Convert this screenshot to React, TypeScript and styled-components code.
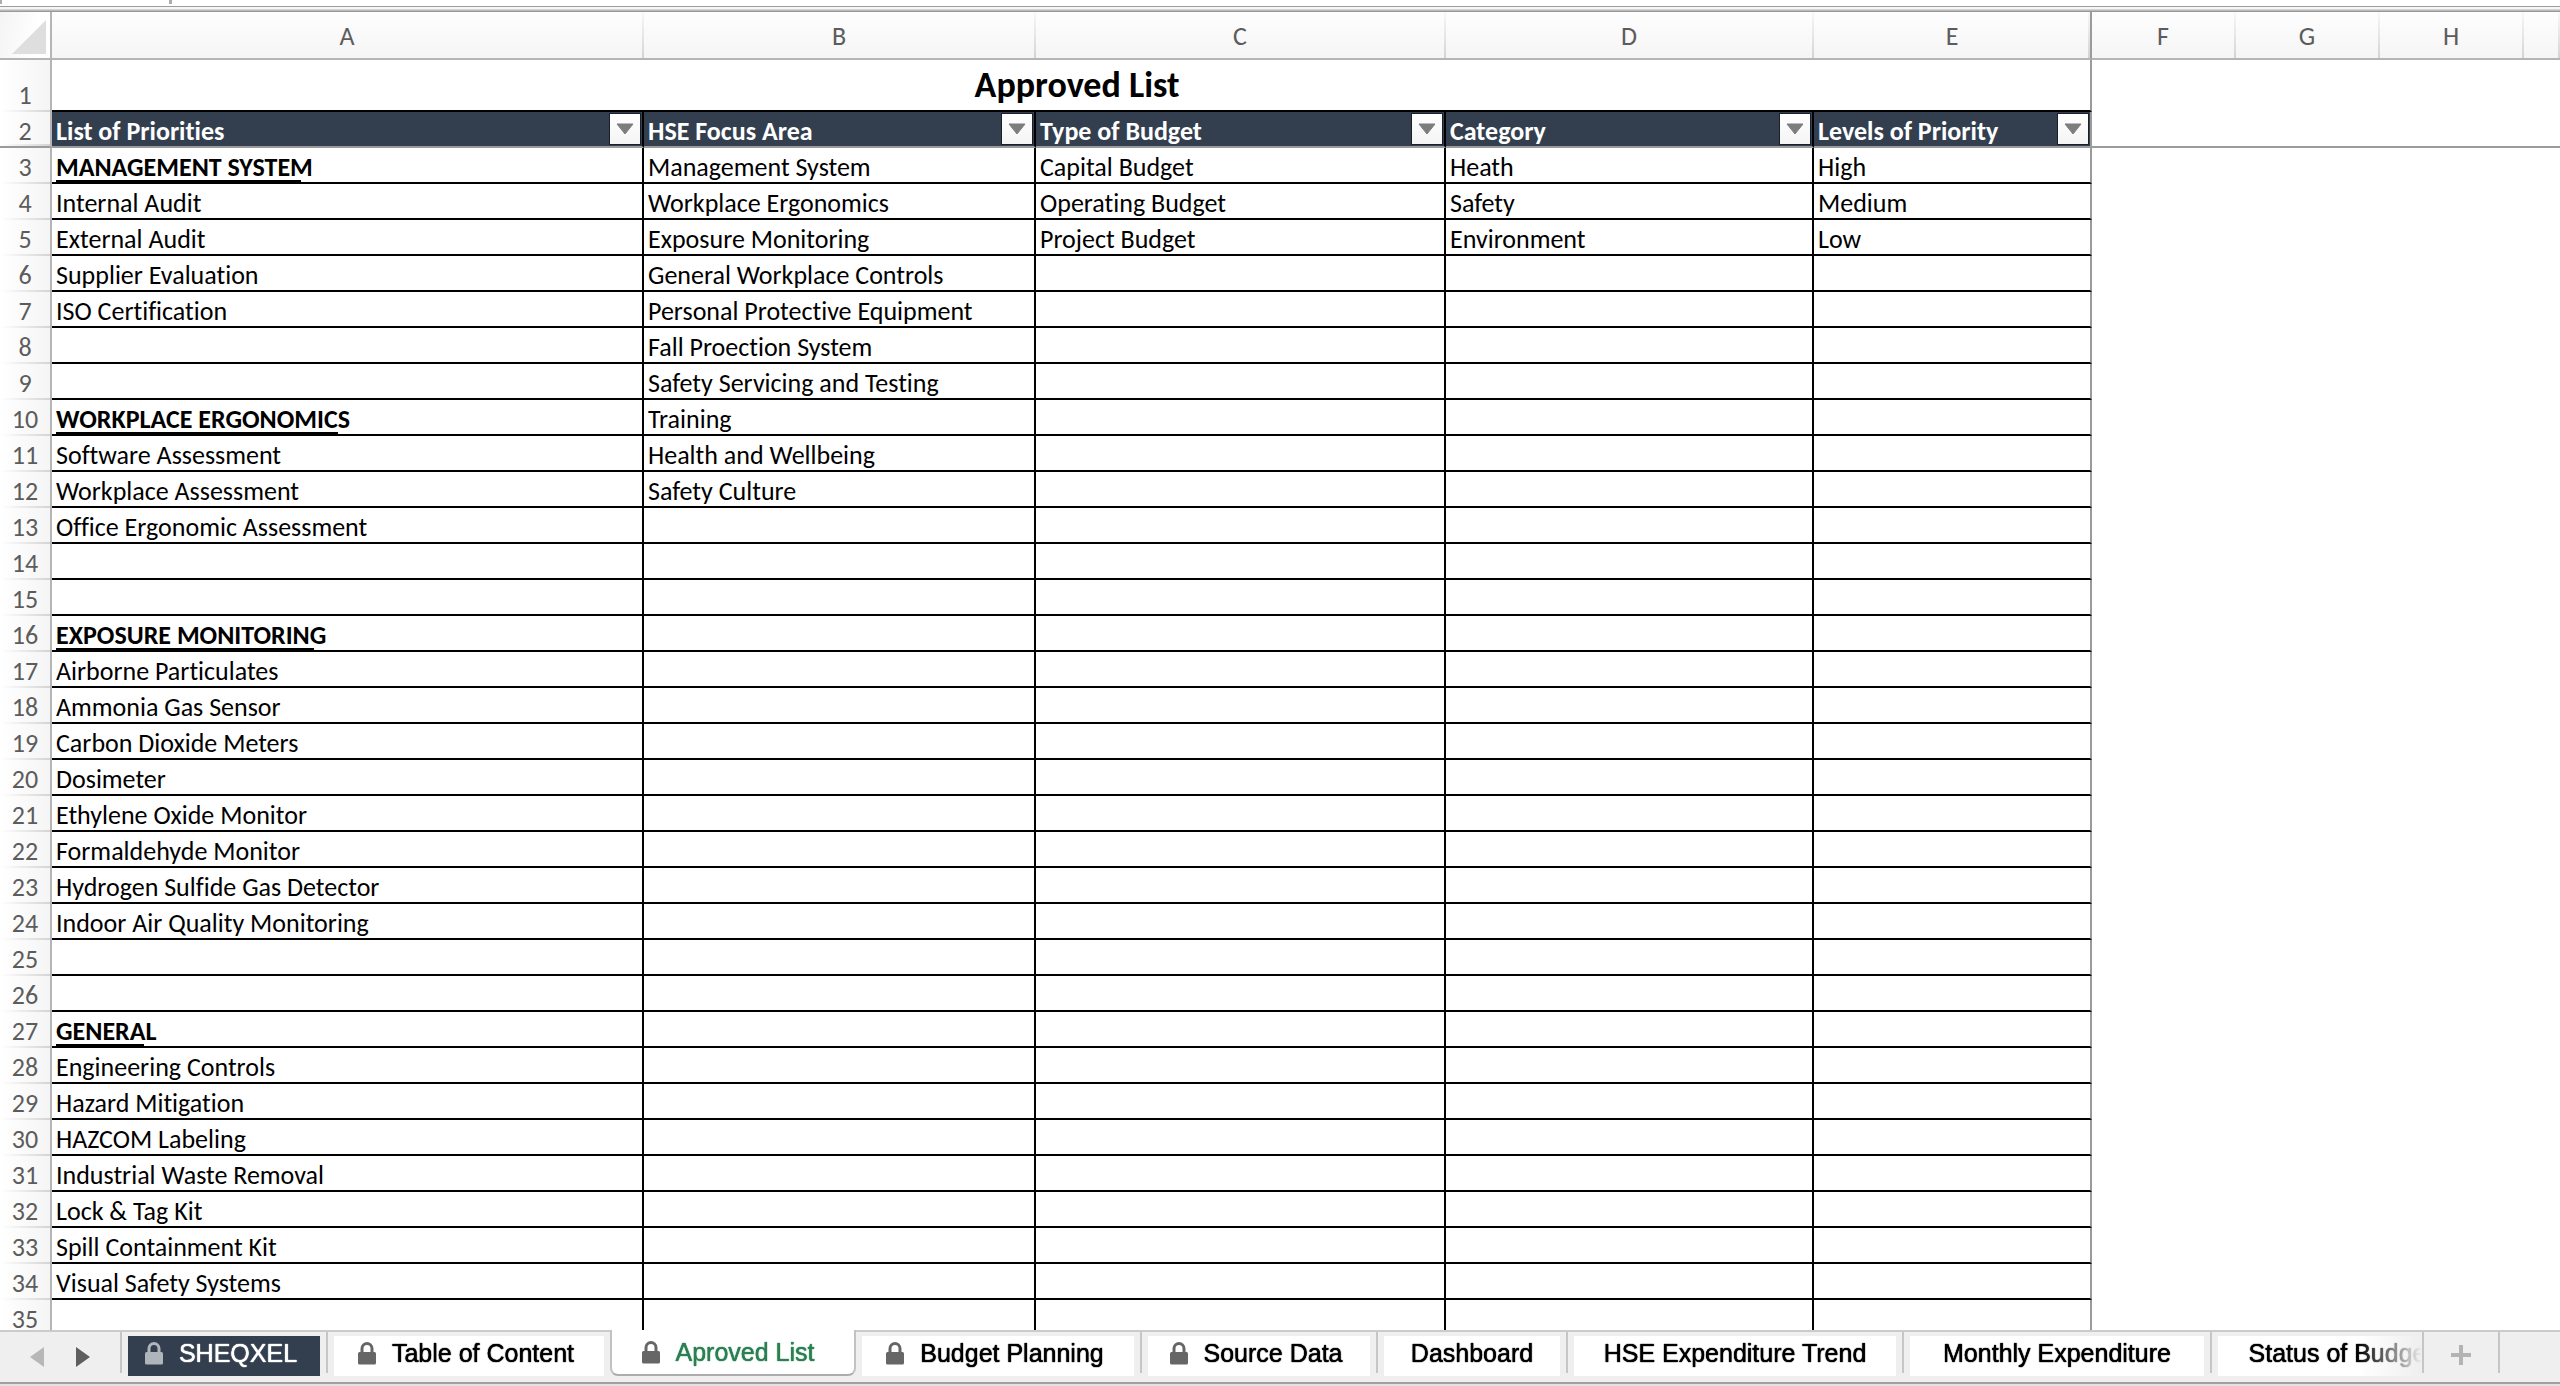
import React from 'react';
import styled, { createGlobalStyle, css } from 'styled-components';

const cellFont = 'Carlito, Calibri, Lato, sans-serif';
const tabFont = '"Liberation Sans", Arial, sans-serif';

const GlobalStyle = createGlobalStyle`
  *, *::before, *::after { box-sizing: border-box; }
  body { margin: 0; background: #fff; }
  button { appearance: none; margin: 0; padding: 0; border: 0; background: none; font: inherit; color: inherit; }
`;

const Workbook = styled.div`
  display: flex;
  flex-direction: column;
  height: 100vh;
  overflow: hidden;
  background: #fff;
  font-family: ${cellFont};
  font-size: 26px;
  font-variant-ligatures: none;
  line-height: 30px;
  color: #000;
`;

const FormulaBarEdge = styled.div`
  flex: none;
  display: flex;
  height: 12px;
  padding-bottom: 6px;
  background: linear-gradient(
    #fff 6px, #9c9c9c 6px, #9c9c9c 7px, #f6f6f6 7px, #f6f6f6 9px,
    #d6d6d6 9px, #d6d6d6 10px, #9a9a9a 11px
  );
`;

const NameBoxEdge = styled.div`
  width: 172px;
  height: 4px;
  border: solid #adadad;
  border-width: 0 3px 0 2px;
`;

const SheetArea = styled.main`
  flex: 1;
  min-height: 0;
  overflow: hidden;
`;

const Sheet = styled.table`
  width: 100%;
  table-layout: fixed;
  border-collapse: separate;
  border-spacing: 0;
`;

const Col = styled.col<{ $width?: number }>`
  width: ${({ $width }) => ($width ? `${$width}px` : 'auto')};
`;

const HeadRow = styled.tr`
  height: 48px;
`;

const Corner = styled.td`
  height: 48px;
  padding: 0 4px 4px 0;
  border-right: 2px solid #b5b5b5;
  border-bottom: 2px solid #b5b5b5;
  background: linear-gradient(100deg, #f4f4f4, #fff 70%);
  text-align: right;
  vertical-align: bottom;
  svg { display: block; margin-left: auto; }
`;

const ColumnHead = styled.th<{ $edge?: boolean }>`
  padding: 0 2px 0 0;
  border-bottom: 2px solid #b5b5b5;
  background:
    linear-gradient(#f8f8f8, #d4d4d4) right / 2px 100% no-repeat,
    linear-gradient(#fefefe, #f5f5f5);
  color: #5c5c5c;
  font-weight: 400;
  line-height: 44px;
  text-align: center;
  vertical-align: bottom;
  ${({ $edge }) => $edge && css`
    padding-right: 0;
    border-right: 2px solid #9b9b9b;
  `}
`;

const Row = styled.tr<{ $tall?: boolean }>`
  height: ${({ $tall }) => ($tall ? 52 : 36)}px;
`;

const RowHead = styled.th<{ $frozen?: boolean }>`
  padding: 0 0 2px;
  border-right: 2px solid #b5b5b5;
  background:
    linear-gradient(90deg, #fff, #d4d4d4) bottom / 100% 2px no-repeat,
    linear-gradient(90deg, #fff, #f5f5f5);
  color: #5c5c5c;
  font-weight: 400;
  text-align: center;
  vertical-align: bottom;
  ${({ $frozen }) => $frozen && css`
    padding-bottom: 0;
    border-bottom: 2px solid #9b9b9b;
  `}
`;

const TitleCell = styled.td`
  padding: 0 0 0 12px;
  border-right: 2px solid #9b9b9b;
  border-bottom: 2px solid #000;
  font-size: 36px;
  font-weight: 700;
  line-height: 50px;
  text-align: center;
  vertical-align: bottom;
`;

const FieldCell = styled.td<{ $last?: boolean }>`
  padding: 0 1px 0 4px;
  border-right: 2px solid ${({ $last }) => ($last ? '#9b9b9b' : '#000')};
  border-bottom: 2px solid #9b9b9b;
  background: #333f4f;
  color: #fff;
  font-weight: 700;
`;

const FieldLabel = styled.div`
  display: flex;
  align-items: center;
  justify-content: space-between;
  height: 34px;
  white-space: nowrap;
`;

const FieldName = styled.span`
  align-self: flex-end;
`;

const FilterButton = styled.button`
  display: flex;
  align-items: center;
  justify-content: center;
  width: 32px;
  height: 32px;
  border: 1px solid #1a2029;
  background: linear-gradient(#fff, #f4f4f4);
`;

const Cell = styled.td<{ $last?: boolean }>`
  padding: 0 0 0 4px;
  border-right: 2px solid ${({ $last }) => ($last ? '#9b9b9b' : '#000')};
  border-bottom: 2px solid #000;
  white-space: nowrap;
  vertical-align: bottom;
`;

const Heading = styled.strong`
  display: inline-block;
  height: 30px;
  padding-top: 2px;
  line-height: 26px;
  background: linear-gradient(#000, #000) left bottom / calc(100% - 12px) 2px no-repeat;
  vertical-align: bottom;
`;

const Blank = styled.td<{ $frozen?: boolean }>`
  padding: 0;
  ${({ $frozen }) => $frozen && css`border-bottom: 2px solid #9b9b9b;`}
`;

const TabBar = styled.footer`
  flex: none;
  display: flex;
  align-items: flex-start;
  height: 56px;
  border-bottom: 2px solid #e2e2e2;
  background:
    linear-gradient(#cbcbcb, #cbcbcb) top / 100% 2px no-repeat,
    linear-gradient(#a0a0a0, #a0a0a0) bottom / 100% 2px no-repeat,
    #efefef;
  font-family: ${tabFont};
  font-size: 25px;
  line-height: 28px;
`;

const Scrollers = styled.div`
  flex: none;
  display: flex;
  align-items: center;
  justify-content: space-between;
  width: 120px;
  height: 54px;
  padding: 0 30px;
`;

const ScrollButton = styled.button<{ $dim?: boolean }>`
  display: flex;
  color: ${({ $dim }) => ($dim ? '#b7b7b7' : '#5e5e5e')};
`;

const Tabs = styled.nav`
  flex: 1;
  min-width: 0;
  display: flex;
  height: 52px;
  overflow: hidden;
  mask-image: linear-gradient(90deg, #000 calc(100% - 64px), transparent);
`;

const Slot = styled.div<{ $width: number; $line: boolean }>`
  flex: none;
  display: flex;
  width: ${({ $width }) => $width}px;
  height: 46px;
  padding: 6px 6px 0 ${({ $line }) => ($line ? 8 : 6)}px;
  background: ${({ $line }) =>
    $line ? 'linear-gradient(#c6c6c6, #c6c6c6) 0 2px / 2px 41px no-repeat' : 'none'};
`;

const tabBase = css`
  display: flex;
  align-items: center;
  justify-content: center;
  gap: 16px;
  white-space: nowrap;
  text-shadow: 0 0 1px currentColor, 0 0 1px currentColor;
`;

const Tab = styled.button<{ $locked: boolean; $dark: boolean }>`
  ${tabBase}
  flex: 1;
  height: 40px;
  padding: 0 ${({ $locked }) => ($locked ? 6 : 0)}px 6px 0;
  background: ${({ $dark }) => ($dark ? '#333f4f' : '#fff')};
  color: ${({ $dark }) => ($dark ? '#fff' : '#000')};
  svg { color: ${({ $dark }) => ($dark ? '#b0b5bc' : '#666')}; }
`;

const ActiveTab = styled.button<{ $width: number }>`
  ${tabBase}
  flex: none;
  width: ${({ $width }) => $width}px;
  height: 46px;
  padding-right: 10px;
  border: solid #c2c2c2;
  border-width: 0 2px 2px;
  border-bottom-color: #adadad;
  border-radius: 0 0 8px 8px;
  background: #fff;
  color: #2b8052;
  svg { color: #666; }
`;

const AddTab = styled.button`
  flex: none;
  display: flex;
  align-items: center;
  justify-content: center;
  width: 78px;
  height: 41px;
  margin-top: 2px;
  padding-top: 4px;
  border: solid #c6c6c6;
  border-width: 0 2px;
  color: #b3b3b3;
`;

const BarEnd = styled.div`
  flex: none;
  width: 60px;
`;

const LockIcon = () => (
  <svg width="18" height="24" viewBox="0 0 18 24" aria-hidden="true">
    <path d="M4 12V7.5a5 5 0 0 1 10 0V12" fill="none" stroke="currentColor" strokeWidth="3" />
    <rect x="0" y="11" width="18" height="12.5" rx="1.5" fill="currentColor" />
  </svg>
);

type TabInfo = { name: string; width: number; locked?: boolean; dark?: boolean; active?: boolean };

const tabs: TabInfo[] = [
  { name: 'SHEQXEL', width: 206, locked: true, dark: true },
  { name: 'Table of Content', width: 284, locked: true },
  { name: 'Aproved List', width: 246, locked: true, active: true },
  { name: 'Budget Planning', width: 284, locked: true },
  { name: 'Source Data', width: 236, locked: true },
  { name: 'Dashboard', width: 190 },
  { name: 'HSE Expenditure Trend', width: 336 },
  { name: 'Monthly Expenditure', width: 308 },
  { name: 'Status of Budget', width: 260 },
];

const columns = [
  { letter: 'A', width: 592 },
  { letter: 'B', width: 392 },
  { letter: 'C', width: 410 },
  { letter: 'D', width: 368 },
  { letter: 'E', width: 278 },
  { letter: 'F', width: 144 },
  { letter: 'G', width: 144 },
  { letter: 'H', width: 144 },
];

const fields = ['List of Priorities', 'HSE Focus Area', 'Type of Budget', 'Category', 'Levels of Priority'];

const priorities = [
  'MANAGEMENT SYSTEM', 'Internal Audit', 'External Audit', 'Supplier Evaluation', 'ISO Certification', '', '',
  'WORKPLACE ERGONOMICS', 'Software Assessment', 'Workplace Assessment', 'Office Ergonomic Assessment', '', '',
  'EXPOSURE MONITORING', 'Airborne Particulates', 'Ammonia Gas Sensor', 'Carbon Dioxide Meters', 'Dosimeter',
  'Ethylene Oxide Monitor', 'Formaldehyde Monitor', 'Hydrogen Sulfide Gas Detector',
  'Indoor Air Quality Monitoring', '', '',
  'GENERAL', 'Engineering Controls', 'Hazard Mitigation', 'HAZCOM Labeling', 'Industrial Waste Removal',
  'Lock & Tag Kit', 'Spill Containment Kit', 'Visual Safety Systems', '',
];

const focusAreas = [
  'Management System', 'Workplace Ergonomics', 'Exposure Monitoring', 'General Workplace Controls',
  'Personal Protective Equipment', 'Fall Proection System', 'Safety Servicing and Testing', 'Training',
  'Health and Wellbeing', 'Safety Culture',
];

const lists = [
  focusAreas,
  ['Capital Budget', 'Operating Budget', 'Project Budget'],
  ['Heath', 'Safety', 'Environment'],
  ['High', 'Medium', 'Low'],
];

const headings = new Set(['MANAGEMENT SYSTEM', 'WORKPLACE ERGONOMICS', 'EXPOSURE MONITORING', 'GENERAL']);

export default function App() {
  return (
    <>
      <GlobalStyle />
      <Workbook>
        <FormulaBarEdge>
          <NameBoxEdge />
        </FormulaBarEdge>
        <SheetArea>
          <Sheet>
            <colgroup>
              <Col $width={52} />
              {columns.map((c) => <Col key={c.letter} $width={c.width} />)}
              <Col />
            </colgroup>
            <thead>
              <HeadRow>
                <Corner>
                  <svg width="34" height="34" viewBox="0 0 34 34" aria-hidden="true">
                    <path d="M34 0V34H0Z" fill="#dedede" />
                  </svg>
                </Corner>
                {columns.map((c) => (
                  <ColumnHead key={c.letter} scope="col" $edge={c.letter === 'E'}>{c.letter}</ColumnHead>
                ))}
                <ColumnHead />
              </HeadRow>
            </thead>
            <tbody>
              <Row $tall>
                <RowHead scope="row">1</RowHead>
                <TitleCell colSpan={5}>Approved List</TitleCell>
                <Blank colSpan={4} />
              </Row>
              <Row>
                <RowHead scope="row" $frozen>2</RowHead>
                {fields.map((name, i) => (
                  <FieldCell key={name} $last={i === fields.length - 1}>
                    <FieldLabel>
                      <FieldName>{name}</FieldName>
                      <FilterButton aria-label={`Filter ${name}`}>
                        <svg width="18" height="12" viewBox="0 0 18 12" aria-hidden="true">
                          <path d="M1 1H17L9 11Z" fill="#7d7d7d" stroke="#7d7d7d" strokeLinejoin="round" />
                        </svg>
                      </FilterButton>
                    </FieldLabel>
                  </FieldCell>
                ))}
                <Blank colSpan={4} $frozen />
              </Row>
              {priorities.map((item, i) => (
                <Row key={i}>
                  <RowHead scope="row">{i + 3}</RowHead>
                  <Cell>{headings.has(item) ? <Heading>{item}</Heading> : item}</Cell>
                  {lists.map((list, j) => (
                    <Cell key={j} $last={j === lists.length - 1}>{list[i] ?? ''}</Cell>
                  ))}
                  <Blank colSpan={4} />
                </Row>
              ))}
            </tbody>
          </Sheet>
        </SheetArea>
        <TabBar>
          <Scrollers>
            <ScrollButton $dim aria-label="Previous sheets">
              <svg width="14" height="20" viewBox="0 0 14 20" aria-hidden="true">
                <path d="M14 0V20L0 10Z" fill="currentColor" />
              </svg>
            </ScrollButton>
            <ScrollButton aria-label="Next sheets">
              <svg width="14" height="20" viewBox="0 0 14 20" aria-hidden="true">
                <path d="M0 0V20L14 10Z" fill="currentColor" />
              </svg>
            </ScrollButton>
          </Scrollers>
          <Tabs>
            {tabs.map((t, i) =>
              t.active ? (
                <ActiveTab key={t.name} $width={t.width} aria-current="page">
                  <LockIcon />
                  {t.name}
                </ActiveTab>
              ) : (
                <Slot key={t.name} $width={t.width} $line={!tabs[i - 1]?.active}>
                  <Tab $locked={!!t.locked} $dark={!!t.dark}>
                    {t.locked && <LockIcon />}
                    {t.name}
                  </Tab>
                </Slot>
              ),
            )}
          </Tabs>
          <AddTab aria-label="Add sheet">
            <svg width="20" height="20" viewBox="0 0 20 20" aria-hidden="true">
              <path d="M10 0V20M0 10H20" stroke="currentColor" strokeWidth="4" />
            </svg>
          </AddTab>
          <BarEnd />
        </TabBar>
      </Workbook>
    </>
  );
}
